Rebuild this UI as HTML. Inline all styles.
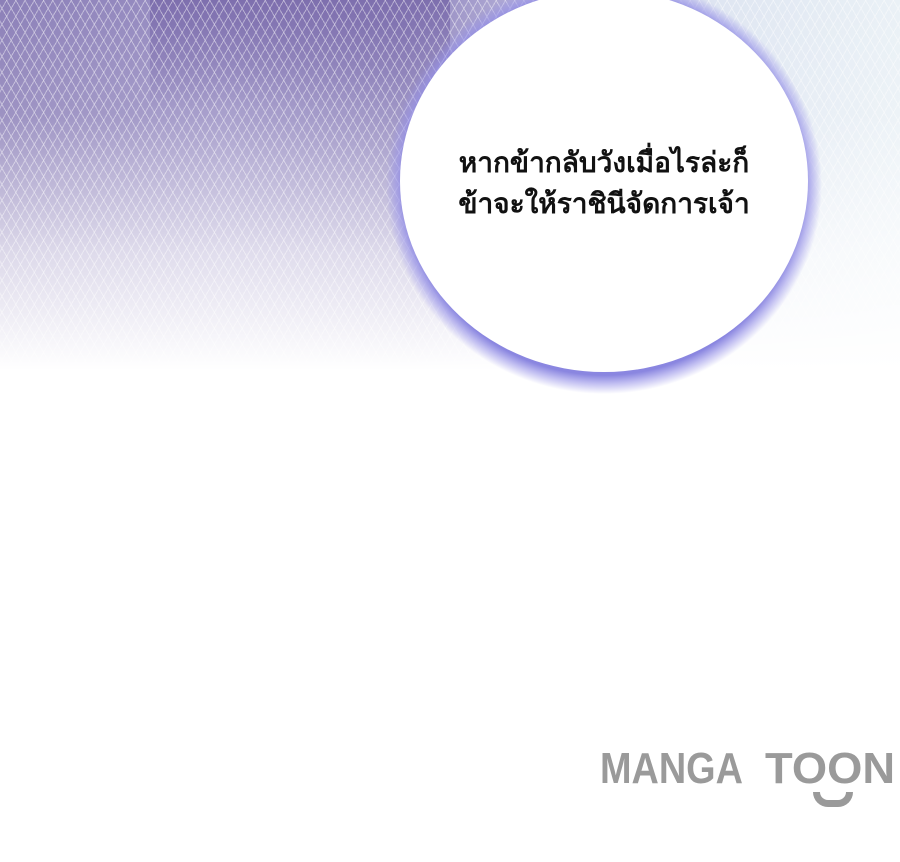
<!DOCTYPE html>
<html><head><meta charset="utf-8"><style>
html,body{margin:0;padding:0;width:900px;height:862px;background:#fff;overflow:hidden;position:relative;font-family:"Liberation Sans",sans-serif}
.bg{position:absolute;left:0;top:0;width:900px;height:390px;
background:
linear-gradient(180deg,rgba(255,255,255,0) 0%,rgba(255,255,255,.15) 30%,rgba(255,255,255,.7) 65%,#fff 95%),
linear-gradient(90deg,#8c80b8 0%,#9a90c4 25%,#8f84bc 45%,#b9b5dc 60%,#dfe6f2 80%,#eaf1f6 100%);}
.dark{position:absolute;left:150px;top:0;width:300px;height:110px;background:linear-gradient(180deg,#7e6fae,rgba(126,111,174,0));border-radius:0 0 40px 0}
.mesh{position:absolute;left:0;top:0;width:900px;height:390px;opacity:.7;
background:repeating-linear-gradient(60deg,rgba(255,255,255,.6) 0 1px,transparent 1px 8px),repeating-linear-gradient(-60deg,rgba(255,255,255,.6) 0 1px,transparent 1px 8px)}
.glow{position:absolute;left:386px;top:-24px;width:436px;height:418px;border-radius:50%;
background:radial-gradient(ellipse closest-side at center,#8a86e0 91%,rgba(150,145,232,.6) 95%,rgba(255,255,255,0) 100%)}
.bubble{position:absolute;left:400px;top:-10px;width:408px;height:382px;border-radius:50%;background:#fff}
.t{position:absolute;left:400px;width:408px;text-align:center;font-size:28px;font-weight:bold;color:#111;line-height:42px}
.w{position:absolute;top:747px;font-size:44px;font-weight:900;color:#9a9a9a;white-space:nowrap;transform-origin:left top;line-height:44px}
.smile{position:absolute;left:813px;top:792px;width:40px;height:15px;border:7px solid #9a9a9a;border-top:none;border-radius:0 0 30px 30px;box-sizing:border-box}
</style></head><body>
<div class="bg"></div>
<div class="dark"></div>
<div class="mesh"></div>
<div class="glow"></div>
<div class="bubble"></div>
<div class="t" style="top:142px">หากข้ากลับวังเมื่อไรล่ะก็</div>
<div class="t" style="top:183px">ข้าจะให้ราชินีจัดการเจ้า</div>
<div class="w" style="left:600px;transform:scaleX(0.86)">MANGA</div>
<div class="w" style="left:765px;transform:scaleX(1.03)">TOON</div>
<div class="smile"></div>
</body></html>
